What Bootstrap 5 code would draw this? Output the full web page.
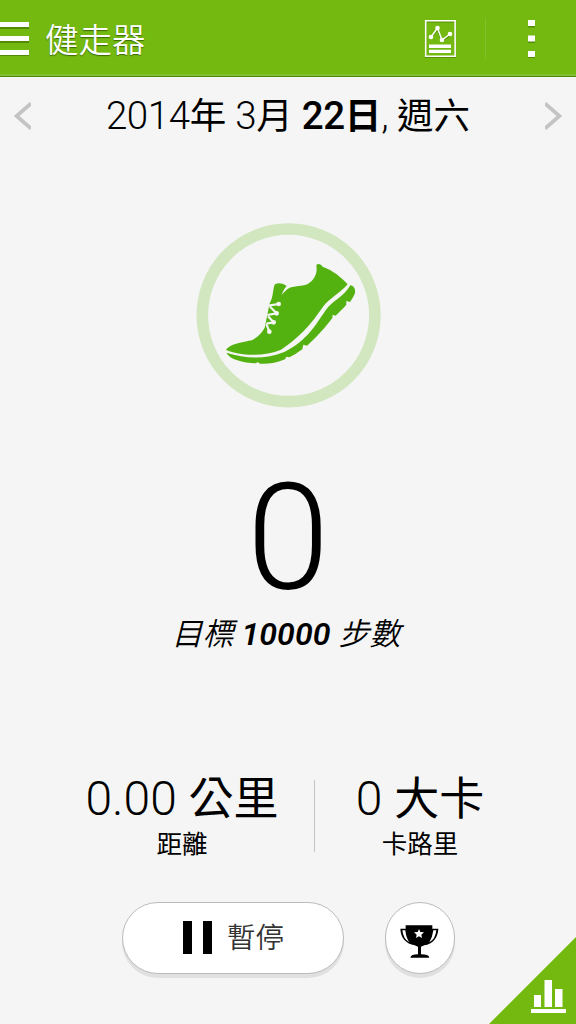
<!DOCTYPE html>
<html lang="zh-Hant">
<head>
<meta charset="utf-8">
<meta name="viewport" content="width=device-width, initial-scale=1">
<title>健走器</title>
<link href="https://cdn.jsdelivr.net/npm/bootstrap@5.3.0/dist/css/bootstrap.min.css" rel="stylesheet">
<style>
body{background:#f5f5f5;color:#000;font-family:Roboto,"Noto Sans CJK TC",sans-serif;font-weight:300;width:576px;height:1024px;overflow:hidden;line-height:1}
.cjk{font-family:"Noto Sans CJK TC",sans-serif;font-weight:400}
b,b .cjk{font-weight:700}
.topbar{height:77px;background:#73b90f;border-bottom:1px solid #4e8b00;box-shadow:inset 0 -2px #81bd35;color:#fff}
.title{font-size:33.5px;line-height:40px;margin:0 0 1px 15px;font-weight:350;text-shadow:0 1px 1px #3d6a00}
.datebar{height:77px;padding:0 14px}
.date{font-size:38.5px;line-height:44px;letter-spacing:-.4px;margin-top:-2px}
.date b{font-weight:500}
.date .cjk{font-size:36.5px;letter-spacing:0}
.hero{height:184px;margin-top:69px}
.hero svg{width:200px;height:200px;margin:-8px 0 0 4px}
.steps{font-size:149px;line-height:150px;margin-top:56px}
.goal{font-size:32px;line-height:40px;font-style:italic;margin:-1px 0 0 -4px;letter-spacing:.1px}
.goal .cjk{font-size:31px;font-weight:350}
.goal b{font-weight:600}
.stats{margin-top:115px}
.distance{width:264px;margin-left:50px}
.energy{width:210px}
.num{font-size:48px;line-height:54px}
.num .cjk{font-size:45px}
.lbl{font-size:25.5px;line-height:34px;margin-top:-1px}
.rule{width:1px;height:72px;margin-top:3px;background:#c4c4c4}
.actions{margin:43px 0 0 122px;gap:41px}
.pill{background:#fff;border:1px solid #bbb;box-shadow:0 4px #e0e0e0;height:72px;border-radius:36px}
.pause{width:222px;font-size:28.5px;font-weight:350;color:#333}
.pause svg{margin:0 14px 0 60px}
.pause span{margin-top:-3px}
.award{width:70px}
.award svg{margin-top:7px}
.corner{width:88px;height:88px}
</style>
</head>
<body class="position-relative d-flex flex-column">
<header class="topbar d-flex align-items-center flex-shrink-0">
  <svg width="30" height="36" viewBox="0 0 30 36"><path d="M0 3h29v6H0zM0 17h29v6H0zM0 31h29v5H0z" fill="#3d6a00" opacity=".6"/><path d="M0 2h29v5H0zM0 16h29v5H0zM0 30h29v5H0z" fill="#fff"/></svg>
  <div class="title cjk">健走器</div>
  <svg class="ms-auto" width="152" height="76" viewBox="424 0 152 76">
    <g transform="translate(0 1)" fill="none" stroke="#477f00" opacity=".65"><path d="M425.7 20.7h29.4v35.6h-29.4z" stroke-width="1.6"/><path d="M431 37l6.500-9 4.500 12 8-6" stroke-width="2"/></g>
    <path d="M425.7 20.7h29.4v35.6h-29.4z" fill="none" stroke="#fff" stroke-width="1.6"/>
    <path d="M431 37l6.500-9 4.500 12 8-6" fill="none" stroke="#fff" stroke-width="1.5"/>
    <g fill="#fff"><circle cx="431" cy="37" r="2.300"/><circle cx="437.500" cy="28" r="2.300"/><circle cx="442" cy="40" r="2.300"/><circle cx="450" cy="34" r="2.300"/><path d="M429 44.500h22v3.500h-22zM429 49.700h22v3.300h-22z"/></g>
    <path d="M485.500 18v41" stroke="#80c22c"/>
    <path d="M528 21h7v6.500h-7zM528 36.500h7v6.500h-7zM528 52h7v6h-7z" fill="#447700" opacity=".7"/>
    <path d="M528 20h7v6h-7zM528 35.500h7v6h-7zM528 51h7v6h-7z" fill="#fff"/>
  </svg>
</header>
<main>
  <div class="datebar d-flex align-items-center justify-content-between">
    <svg width="17" height="30" viewBox="0 0 17 30"><path d="M17 2.500L2.500 15l14.500 12.500" fill="none" stroke="#c4c4c4" stroke-width="3.800"/></svg>
    <div class="date text-nowrap">2014<span class="cjk">年</span> 3<span class="cjk">月</span> <b>22<span class="cjk">日</span></b>, <span class="cjk">週六</span></div>
    <svg width="17" height="30" viewBox="0 0 17 30"><path d="M0 2.500l14.500 12.500L0 27.500" fill="none" stroke="#c4c4c4" stroke-width="3.800"/></svg>
  </div>
  <div class="hero d-flex justify-content-center">
    <svg viewBox="190 215 200 200">
      <circle cx="288.600" cy="315.300" r="86.300" fill="none" stroke="#d2e7c0" stroke-width="11.600"/>
      <g transform="translate(190 215) scale(.33333)">
        <path d="M108 405C120 390 133 386 186 376C205 365 217 352 224 338L239 265C250 250 249 215 255 208C266 201 281 206 290 213C282 222 277 232 275 240C285 228 294 218 308 216C326 212 340 214 352 208C374 194 383 175 379 150C384 145 392 146 398 155C432 168 454 187 473 208C452 233 419 250 400 274C376 308 345 357 273 404C222 425 151 423 108 405Z" fill="#53b210"/>
        <path d="M109 413C167 431 224 434 283 411C351 378 378 328 407 286C428 256 461 247 481 211C491 212 497 222 495 234C492 244 486 251 480 261L469 258L469 269C459 282 448 290 437 302L428 299L427 309C406 337 384 362 351 392L340 389L337 403C323 413 312 420 298 427L289 425L285 433C261 444 235 447 210 446L203 441L198 445C158 443 119 433 109 413Z" fill="#53b210"/>
        <path d="M236 272L265 267M240 275L260 295M260 295L232 300M234 304L251 322M251 322L229 326M229 327L238 350" fill="none" stroke="#f5f5f5" stroke-width="6.500"/>
        <g fill="#f5f5f5"><circle cx="266" cy="267" r="7"/><circle cx="260" cy="295" r="7"/><circle cx="251" cy="322" r="7"/><circle cx="238" cy="350" r="7"/></g>
      </g>
    </svg>
  </div>
  <div class="steps text-center">0</div>
  <div class="goal text-center text-nowrap"><span class="cjk">目標</span> <b>10000</b> <span class="cjk">步數</span></div>
  <div class="stats d-flex align-items-center">
    <div class="distance text-center"><div class="num text-nowrap">0.00 <span class="cjk">公里</span></div><div class="lbl cjk">距離</div></div>
    <div class="rule"></div>
    <div class="energy text-center"><div class="num text-nowrap">0 <span class="cjk">大卡</span></div><div class="lbl cjk">卡路里</div></div>
  </div>
  <div class="actions d-flex">
    <div class="pill pause d-flex align-items-center cjk"><svg width="30" height="34"><path d="M0 0h9v33H0zM20 0h9v33H20z"/></svg><span>暫停</span></div>
    <div class="pill award d-flex align-items-center justify-content-center"><svg width="40" height="36" viewBox="77 103 120 108"><path d="M94 107h80v10h18c-1 28-17 46-42 50l-10 4v23q23 0 25 10h-57q2-10 23-10v-23l-10-4c-26-5-42-22-43-50h16z"/><path d="M84 122h9q2 22 12 36-18-9-21-36zm93 0h9q-3 27-21 36 9-14 12-36zM134 118l4 9 11 1-8 7 2 10-9-5-9 5 2-10-8-7 11-1z" fill="#fff"/></svg></div>
  </div>
</main>
<svg class="corner position-absolute bottom-0 end-0" viewBox="488 936 88 88"><path d="M576 937v87h-87z" fill="#73b90f"/><path d="M534 995h7v12h-7zM544.500 980h7.500v27h-7.500zM555 989h7.500v18H555zM531 1009h35v4h-35z" fill="#fff"/></svg>
<script src="https://cdn.jsdelivr.net/npm/bootstrap@5.3.0/dist/js/bootstrap.bundle.min.js"></script>
</body>
</html>
